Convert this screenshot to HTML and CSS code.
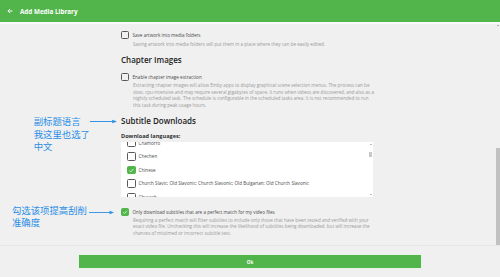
FILE: index.html
```html
<!DOCTYPE html>
<html lang="en">
<head>
  <meta charset="UTF-8">
  <meta name="viewport" content="width=device-width, initial-scale=1.0">
  <title>Add Media Library</title>
  <link rel="stylesheet" href="styles.css">
</head>
<body>
  <div class="topbar">
    <svg class="back" viewBox="0 0 7 6"><path d="M6.5 3H1M3.6 0.6L1.1 3l2.5 2.4" fill="none" stroke="#fff" stroke-width="1.1"/></svg>
    <span class="title">Add Media Library</span>
  </div>

  <div class="scroller">
    <div class="content">
      <div class="check-row">
        <span class="box"></span>
        <span class="label">Save artwork into media folders</span>
      </div>
      <div class="desc">Saving artwork into media folders will put them in a place where they can be easily edited.</div>

      <div class="section-title">Chapter Images</div>
      <div class="check-row">
        <span class="box"></span>
        <span class="label">Enable chapter image extraction</span>
      </div>
      <div class="desc">Extracting chapter images will allow Emby apps to display graphical scene selection menus. The process can be slow, cpu-intensive and may require several gigabytes of space. It runs when videos are discovered, and also as a nightly scheduled task. The schedule is configurable in the scheduled tasks area. It is not recommended to run this task during peak usage hours.</div>

      <div class="section-title subtitle-head">
        Subtitle Downloads
        <div class="note note-lang">
          <span class="note-text">副标题语言<br>我这里也选了<br>中文</span>
          <svg class="note-arrow" viewBox="0 0 28 5"><path d="M0 2.5H24" stroke="#2a8fe6" stroke-width="1"/><path d="M23 0.6L28 2.5L23 4.4Z" fill="#2a8fe6"/></svg>
        </div>
      </div>

      <div class="field-label">Download languages:</div>
      <div class="lang-list">
        <div class="lang-items">
          <div class="lang-item"><span class="box"></span><span class="label">Chamorro</span></div>
          <div class="lang-item"><span class="box"></span><span class="label">Chechen</span></div>
          <div class="lang-item"><span class="box checked"><svg viewBox="0 0 8 8"><path d="M1.6 4.2l1.8 1.8L6.6 2.4" fill="none" stroke="#fff" stroke-width="0.9"/></svg></span><span class="label">Chinese</span></div>
          <div class="lang-item"><span class="box"></span><span class="label">Church Slavic; Old Slavonic; Church Slavonic; Old Bulgarian; Old Church Slavonic</span></div>
          <div class="lang-item"><span class="box"></span><span class="label">Chuvash</span></div>
        </div>
        <div class="mini-scroll">
          <span class="tri up"></span>
          <span class="mini-thumb"></span>
          <span class="tri down"></span>
        </div>
      </div>

      <div class="check-row perfect-row">
        <span class="box checked"><svg viewBox="0 0 8 8"><path d="M1.6 4.2l1.8 1.8L6.6 2.4" fill="none" stroke="#fff" stroke-width="0.9"/></svg></span>
        <span class="label">Only download subtitles that are a perfect match for my video files</span>
        <div class="note note-match">
          <span class="note-text">勾选该项提高刮削<br>准确度</span>
          <svg class="note-arrow" viewBox="0 0 28 5"><path d="M0 2.5H24" stroke="#2a8fe6" stroke-width="1"/><path d="M23 0.6L28 2.5L23 4.4Z" fill="#2a8fe6"/></svg>
        </div>
      </div>
      <div class="desc">Requiring a perfect match will filter subtitles to include only those that have been tested and verified with your exact video file. Unchecking this will increase the likelihood of subtitles being downloaded, but will increase the chances of mistimed or incorrect subtitle text.</div>
    </div>

    <div class="page-scroll">
      <span class="tri up"></span>
      <span class="page-thumb"></span>
    </div>
  </div>

  <div class="actions">
    <button class="ok-button">Ok</button>
  </div>
</body>
</html>
```

FILE: styles.css
```css
body {
  margin: 0;
  height: 277px;
  overflow: hidden;
  display: flex;
  flex-direction: column;
  font-family: "Open Sans", "Noto Sans CJK SC", sans-serif;
  background-color: #f0f0f0;
  color: #444;
}
.topbar {
  flex: none;
  height: 22px;
  display: flex;
  align-items: center;
  gap: 7px;
  padding-left: 7px;
  background-color: #52b54b;
  border-bottom: 2px solid #fafafa;
}
.back {
  width: 6px;
  height: 6px;
}
.title {
  color: #fff;
  font-size: 6.3px;
  font-weight: 700;
}
.scroller {
  flex: none;
  height: 221px;
  display: flex;
  overflow: hidden;
}
.content {
  flex: 1;
  padding: 7px 0 0 121px;
}
.check-row {
  position: relative;
  display: flex;
  align-items: center;
  gap: 3.5px;
  height: 8px;
}
.box {
  flex: none;
  width: 8px;
  height: 8px;
  box-sizing: border-box;
  border: 1px solid #5a5a5a;
  border-radius: 1.5px;
  display: flex;
}
.box.checked {
  background-color: #52b54b;
  border-color: #52b54b;
}
.box svg {
  width: 100%;
  height: 100%;
}
.label {
  font-size: 4.6px;
  color: #4a4a4a;
  white-space: nowrap;
}
.desc {
  width: 241px;
  margin: 2px 0 0 12px;
  font-size: 4.6px;
  line-height: 6.4px;
  color: #9a9a9a;
}
.section-title {
  position: relative;
  margin-top: 8px;
  font-size: 8px;
  line-height: 10px;
  font-weight: 600;
  color: #222;
}
.check-row + .desc {
  margin-top: 1.5px;
}
.section-title + .check-row {
  margin-top: 8px;
}
.field-label {
  margin-top: 6.5px;
  font-size: 5.6px;
  line-height: 7px;
  font-weight: 700;
  color: #333;
}
.lang-list {
  display: flex;
  width: 252px;
  height: 55px;
  margin-top: 2.5px;
  background-color: #fff;
  overflow: hidden;
}
.lang-items {
  flex: 1;
  margin-top: -6px;
}
.lang-item {
  display: flex;
  align-items: center;
  gap: 3px;
  height: 13.5px;
  padding-left: 6px;
}
.lang-item .box {
  width: 8.5px;
  height: 8.5px;
}
.mini-scroll {
  width: 5px;
  display: flex;
  flex-direction: column;
  align-items: center;
  padding: 2px 0;
  box-sizing: border-box;
}
.mini-thumb {
  width: 3px;
  height: 5px;
  margin-top: 7px;
  background-color: #c8c8c8;
}
.tri {
  width: 0;
  height: 0;
  border-left: 1.5px solid transparent;
  border-right: 1.5px solid transparent;
}
.tri.up {
  border-bottom: 1.5px solid #777;
}
.tri.down {
  margin-top: auto;
  border-top: 1.5px solid #777;
}
.perfect-row {
  margin-top: 10.5px;
}
.perfect-row + .desc {
  margin-top: 1.5px;
}
.note {
  position: absolute;
  right: 100%;
  display: flex;
  align-items: flex-start;
  color: #2a8fe6;
  font-family: "Noto Sans CJK SC", sans-serif;
  font-weight: 400;
  font-size: 9.4px;
  line-height: 12.4px;
  white-space: nowrap;
}
.note-lang {
  top: -0.7px;
  margin-right: 4px;
}
.note-match {
  top: -3.2px;
  margin-right: 7px;
  line-height: 12px;
}
.note-arrow {
  width: 27px;
  height: 5px;
  margin-top: 4px;
}
.note-match .note-arrow {
  width: 25px;
  margin-left: 2px;
  margin-top: 5.5px;
}
.page-scroll {
  width: 5px;
  display: flex;
  flex-direction: column;
  align-items: center;
  padding-top: 0.5px;
}
.page-thumb {
  width: 4px;
  height: 97px;
  margin-top: auto;
  background-color: #c1c1c1;
}
.actions {
  flex: 1;
  border-top: 1px solid #e6e6e6;
  padding: 8px 0 0 78px;
}
.ok-button {
  display: block;
  width: 344px;
  height: 15px;
  padding: 0;
  background-color: #52b54b;
  color: #fff;
  border: 0.5px solid #e8f5e6;
  font-family: "Open Sans", sans-serif;
  font-size: 4.6px;
  font-weight: 700;
  cursor: pointer;
}
```
